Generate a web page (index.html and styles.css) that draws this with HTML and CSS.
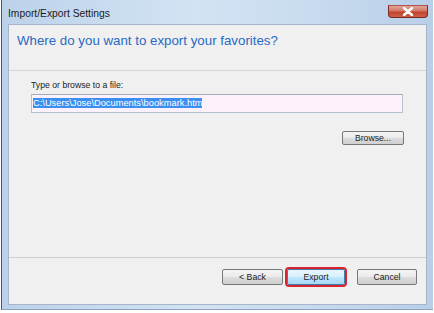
FILE: index.html
```html
<!DOCTYPE html>
<html lang="en">
<head>
    <meta charset="UTF-8">
    <title>Import/Export Settings</title>
    <link rel="stylesheet" href="styles.css">
</head>
<body>
    <div class="window">
        <div class="titlebar">
            <span class="title">Import/Export Settings</span>
            <span class="close">
                <svg width="12" height="9" viewBox="0 0 12 9">
                    <path d="M2 1 L10 8 M10 1 L2 8" stroke="#fff" stroke-width="2.4" stroke-linecap="round"/>
                </svg>
            </span>
        </div>
        <div class="client">
            <div class="header">
                <h1>Where do you want to export your favorites?</h1>
            </div>
            <div class="content">
                <label class="label">Type or browse to a file:</label>
                <div class="path"><span class="selected">C:\Users\Jose\Documents\bookmark.htm</span></div>
                <div class="browse-row">
                    <button class="btn browse">Browse...</button>
                </div>
            </div>
            <div class="footer">
                <button class="btn">&lt; Back</button>
                <button class="btn default">Export</button>
                <button class="btn cancel">Cancel</button>
            </div>
        </div>
    </div>
</body>
</html>
```

FILE: styles.css
```css
body {
    margin: 0;
    background: #fff;
    font-family: "Liberation Sans", Arial, sans-serif;
}
.window {
    width: 432px;
    height: 310px;
    margin-left: 1px;
    padding: 0 6px;
    border-left: 1px solid #4a5565;
    border-bottom: 1px solid #8da3bd;
    box-sizing: border-box;
    background: linear-gradient(90deg, #bcd2ea 0%, #d3e3f4 45%, #c9dbef 70%, #b9cfe8 100%);
    display: flex;
    flex-direction: column;
}
.titlebar {
    height: 24px;
    display: flex;
    align-items: flex-start;
}
.title {
    font-size: 10.3px;
    color: #1b1b1b;
    margin-top: 8px;
}
.close {
    margin-left: auto;
    margin-right: -1px;
    margin-top: 5px;
    width: 40px;
    height: 13px;
    border: 1px solid #7a2a22;
    border-top-color: #b0554d;
    border-radius: 0 0 4px 4px;
    background: linear-gradient(#e2a395 0%, #d27866 45%, #c2432c 55%, #cd6046 100%);
    box-sizing: border-box;
    display: flex;
    align-items: center;
    justify-content: center;
}
.client {
    height: 281px;
    background: #f0f0f0;
    border: 1px solid #a5b6ca;
    box-sizing: border-box;
    display: flex;
    flex-direction: column;
}
.header {
    height: 46px;
    border-bottom: 1px solid #d6d6d6;
    box-sizing: border-box;
    padding: 7px 0 0 8px;
}
h1 {
    margin: 0;
    font-size: 13.3px;
    font-weight: normal;
    line-height: 17px;
    color: #286ac4;
}
.content {
    flex: 1;
    padding: 8px 0 0 22px;
    display: flex;
    flex-direction: column;
}
.label {
    font-size: 8.7px;
    line-height: 12px;
    color: #222;
    margin-bottom: 3px;
}
.path {
    width: 372px;
    height: 19px;
    box-sizing: border-box;
    border: 1px solid #b6c0cd;
    border-top-color: #a3abb7;
    background: #fdf1fc;
    padding: 2px 1px;
    font-size: 9.3px;
    line-height: 13px;
}
.selected {
    background: #3b8ff0;
    color: #fff;
}
.browse-row {
    width: 373px;
    display: flex;
    justify-content: flex-end;
    margin-top: 18px;
}
.btn {
    width: 61px;
    height: 16px;
    padding: 0;
    font-family: "Liberation Sans", Arial, sans-serif;
    font-size: 8.7px;
    color: #1a1a1a;
    border: 1px solid #777;
    border-radius: 2px;
    background: linear-gradient(#f3f3f3 0%, #ebebeb 48%, #dcdcdc 52%, #cfcfcf 100%);
}
.browse {
    width: 62px;
    height: 14px;
}
.footer {
    height: 35px;
    border-top: 1px solid #d0d0d0;
    display: flex;
    justify-content: flex-end;
    padding: 11px 9px 0 0;
    gap: 4px;
}
.default {
    width: 58px;
    border-color: #3c7fb1;
    background: linear-gradient(#eaf6fd 0%, #d9f0fc 48%, #bee6fd 52%, #a7d9f5 100%);
    outline: 2px solid #d9232e;
}
.cancel {
    width: 60px;
    margin-left: 8px;
}
```
